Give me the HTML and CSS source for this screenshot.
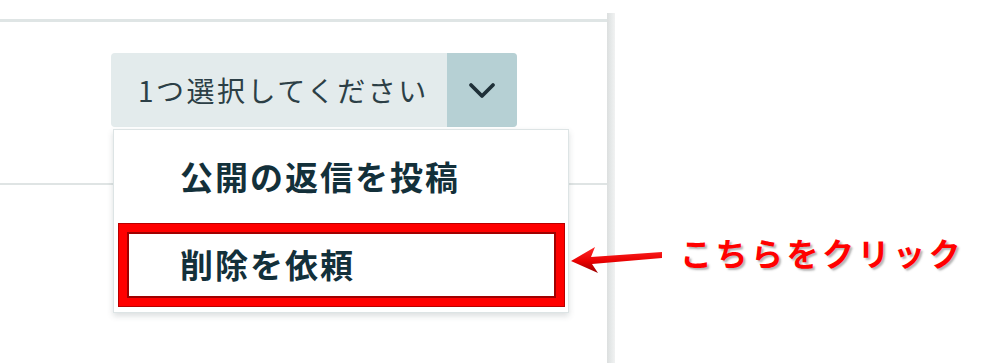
FILE: index.html
```html
<!DOCTYPE html>
<html lang="ja">
<head>
<meta charset="utf-8">
<title>返信</title>
<link rel="stylesheet" href="styles.css">
</head>
<body>
<div class="page">
  <div class="main">
    <div class="toolbar">
      <div class="select-wrap">
        <div class="select">
          <span class="select-label">1つ選択してください</span>
          <span class="select-arrow">
            <svg width="28" height="18" viewBox="0 0 28 18"><path d="M3 4 L14 15 L25 4" fill="none" stroke="#1f3038" stroke-width="3.8" stroke-linecap="round" stroke-linejoin="round"/></svg>
          </span>
        </div>
        <ul class="menu">
          <li class="menu-item">公開の返信を投稿</li>
          <li class="menu-item">削除を依頼<span class="highlight"></span></li>
        </ul>
      </div>
    </div>
  </div>
  <div class="vline"></div>
</div>
<svg class="arrow" width="100" height="32" viewBox="0 0 100 32">
  <defs>
    <linearGradient id="ag" x1="0" y1="0" x2="0" y2="1">
      <stop offset="0" stop-color="#ff2a2a"/>
      <stop offset="0.55" stop-color="#e80000"/>
      <stop offset="1" stop-color="#9a0000"/>
    </linearGradient>
  </defs>
  <polygon points="3,16 27,2 23,12 94,7 94,13 24,19 30,28" fill="url(#ag)"/>
</svg>
<div class="callout">こちらをクリック</div>
</body>
</html>
```
FILE: styles.css
```css
html, body {
  margin: 0;
  padding: 0;
  background: #ffffff;
  width: 991px;
  height: 363px;
  overflow: hidden;
  font-family: "Noto Sans CJK JP", "Noto Sans", sans-serif;
}
.page {
  display: flex;
  height: 363px;
}
.main {
  width: 607px;
  flex: none;
  margin-top: 19px;
}
.toolbar {
  border-top: 3px solid #dfe5e5;
  border-bottom: 2px solid #dfe4e4;
  padding: 31px 0 0 111px;
  box-sizing: border-box;
  height: 166px;
}
.vline {
  width: 8px;
  flex: none;
  margin-top: 13px;
  background: linear-gradient(to right, #dcdfdf, #e6e9e9 50%, #f1f2f2);
}
.select-wrap {
  position: relative;
  width: 406px;
}
.select {
  display: flex;
  height: 74px;
  border-radius: 4px;
  overflow: hidden;
  background: #e3ebec;
}
.select-label {
  flex: 1;
  display: flex;
  align-items: center;
  padding-left: 27px;
  font-size: 28px;
  letter-spacing: 2.5px;
  color: #2c3f46;
  white-space: nowrap;
}
.select-arrow {
  width: 70px;
  flex: none;
  background: #b6d0d4;
  display: flex;
  align-items: center;
  justify-content: center;
}
.menu {
  position: absolute;
  top: 76px;
  left: 2px;
  width: 456px;
  height: 184px;
  box-sizing: border-box;
  margin: 0;
  padding: 2px 0 0 0;
  list-style: none;
  background: #ffffff;
  border: 1px solid #dde4e5;
  box-shadow: 0 3px 6px rgba(60, 80, 85, 0.18);
}
.menu-item {
  position: relative;
  height: 88px;
  display: flex;
  align-items: center;
  padding-left: 66px;
  font-size: 33px;
  font-weight: 700;
  letter-spacing: 2px;
  color: #13303a;
}
.menu-item:last-child {
  margin-top: 0;
}
.highlight {
  position: absolute;
  top: 4px;
  left: 5px;
  width: 445px;
  height: 82px;
  box-sizing: border-box;
  border: 8px solid #ff0000;
  box-shadow: inset 0 0 0 2px #a00000, 0 0 0 1px #b80000;
}
.arrow {
  position: absolute;
  left: 568px;
  top: 245px;
}
.callout {
  position: absolute;
  left: 680px;
  top: 230px;
  font-size: 32px;
  line-height: 44px;
  font-weight: 700;
  letter-spacing: 3.5px;
  color: #ff0000;
  text-shadow: 2px 2px 2px rgba(90, 90, 90, 0.45);
}
```
